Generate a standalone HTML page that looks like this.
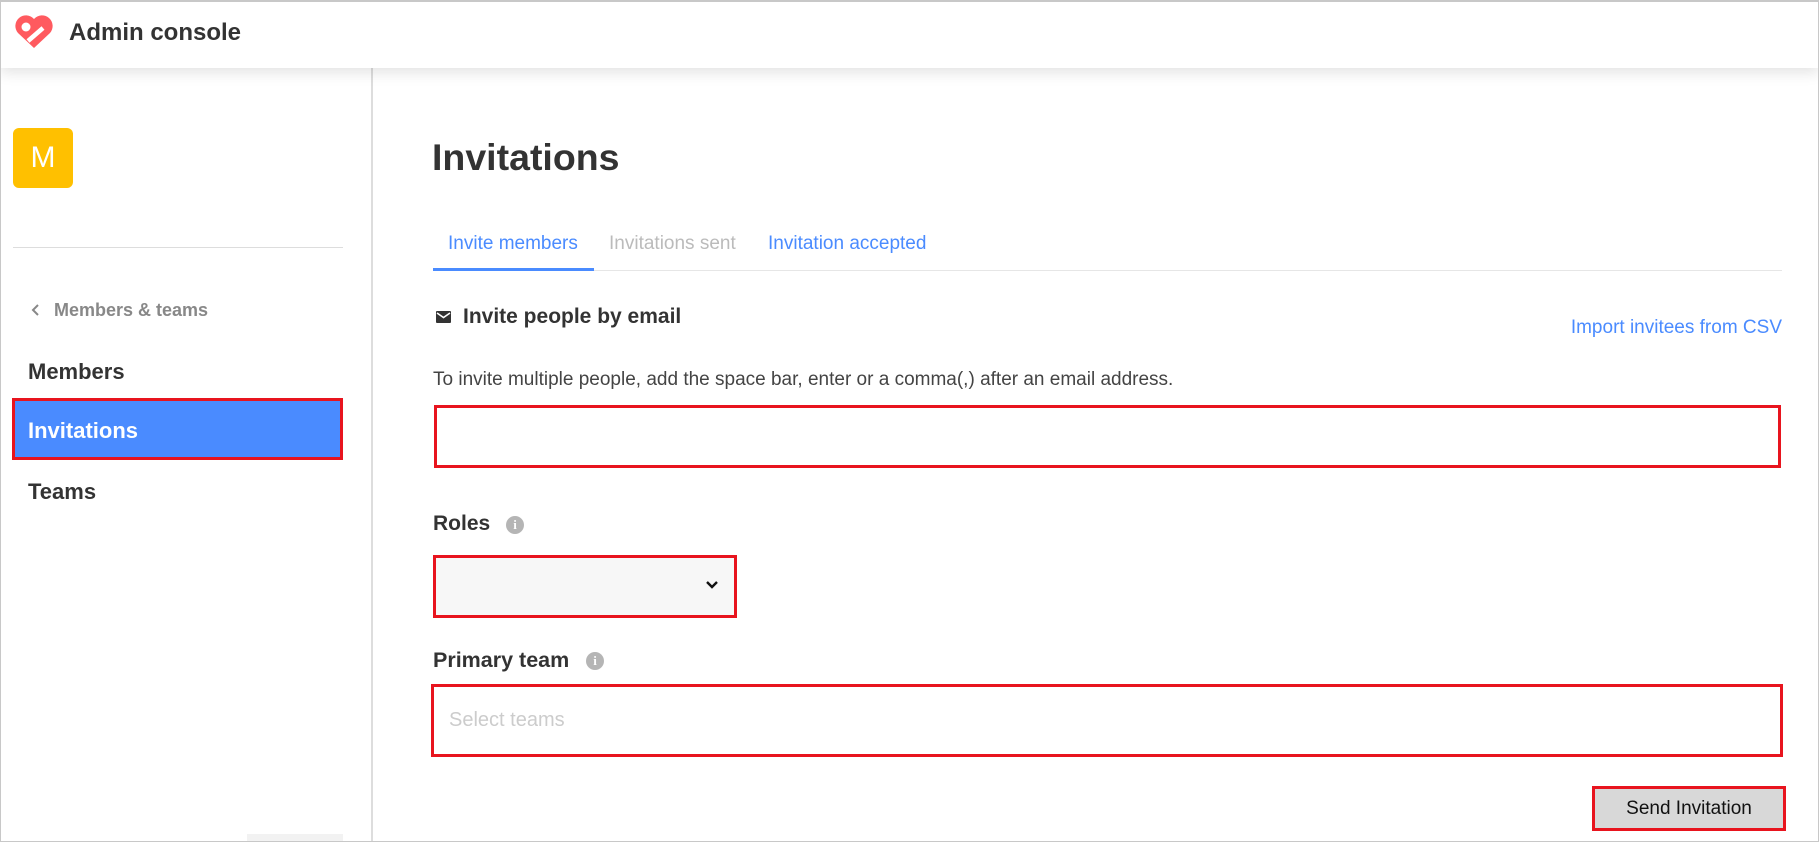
<!DOCTYPE html>
<html><head><meta charset="utf-8"><style>
*{box-sizing:border-box;margin:0;padding:0}
body{width:1819px;height:842px;overflow:hidden;background:#fff;font-family:"Liberation Sans",sans-serif;color:#333;position:relative}
.abs{position:absolute}
.frame{left:0;top:0;width:1819px;height:842px;border:1px solid #c8c8c8;border-top:2px solid #c8c8c8;z-index:10;pointer-events:none}
.hdr{left:0;top:0;width:1819px;height:68px;background:#fff;box-shadow:0 4px 14px rgba(0,0,0,.12);z-index:5}
.side{left:0;top:68px;width:373px;height:774px;border-right:2px solid #ddd}
.b{font-weight:bold}
.red{border:3px solid #e8141e}
</style></head><body>
<div class="abs hdr">
 <svg class="abs" style="left:13px;top:12px" width="42" height="38" viewBox="0 0 42 38">
  <path d="M21 36 L5 21 A9 9 0 0 1 21 7 A9 9 0 0 1 37 21 Z" fill="#ff5a5f"/>
  <circle cx="13" cy="15" r="4.5" fill="#fff"/>
  <path d="M15 29 L30 16" stroke="#fff" stroke-width="4.5"/>
 </svg>
 <div class="abs b" style="left:69px;top:19px;font-size:24px;color:#333">Admin console</div>
</div>
<div class="abs side">
 <div class="abs" style="left:13px;top:60px;width:60px;height:60px;background:#ffc000;border-radius:6px;color:#fff;font-size:30px;text-align:center;line-height:60px">M</div>
 <div class="abs" style="left:13px;top:179px;width:330px;height:1px;background:#ddd"></div>
 <svg class="abs" style="left:31px;top:235px" width="10" height="14" viewBox="0 0 10 14"><path d="M7 2 L2 7 L7 12" stroke="#888" stroke-width="2" fill="none"/></svg>
 <div class="abs b" style="left:54px;top:232px;font-size:18px;color:#888">Members &amp; teams</div>
 <div class="abs b" style="left:28px;top:291px;font-size:22px">Members</div>
 <div class="abs red" style="left:12px;top:330px;width:331px;height:62px;background:#4a8bff"></div>
 <div class="abs b" style="left:28px;top:350px;font-size:22px;color:#fff">Invitations</div>
 <div class="abs b" style="left:28px;top:411px;font-size:22px">Teams</div>
 <div class="abs" style="left:247px;top:766px;width:96px;height:8px;background:#f2f2f2"></div>
</div>
<div class="abs b" style="left:432px;top:136px;font-size:37.5px">Invitations</div>
<div class="abs" style="left:448px;top:233px;font-size:19px;color:#4a8bff">Invite members</div>
<div class="abs" style="left:609px;top:233px;font-size:19px;color:#bbb">Invitations sent</div>
<div class="abs" style="left:768px;top:233px;font-size:19px;color:#4a8bff">Invitation accepted</div>
<div class="abs" style="left:433px;top:270px;width:1349px;height:1px;background:#e6e6e6"></div>
<div class="abs" style="left:433px;top:268px;width:161px;height:3px;background:#4a8bff"></div>
<svg class="abs" style="left:436px;top:311px" width="15" height="12" viewBox="0 0 15 12"><rect width="15" height="12" rx="1" fill="#333"/><path d="M1 2 L7.5 6.5 L14 2" stroke="#fff" stroke-width="1.6" fill="none"/></svg>
<div class="abs b" style="left:463px;top:305px;font-size:21px">Invite people by email</div>
<div class="abs" style="right:37px;top:317px;font-size:19px;color:#4a8bff">Import invitees from CSV</div>
<div class="abs" style="left:433px;top:369px;font-size:19px;color:#444">To invite multiple people, add the space bar, enter or a comma(,) after an email address.</div>
<div class="abs red" style="left:434px;top:405px;width:1347px;height:63px"></div>
<div class="abs b" style="left:433px;top:512px;font-size:21px">Roles</div>
<div class="abs" style="left:506px;top:516px;width:18px;height:18px;border-radius:50%;background:#b5b5b5;color:#fff;font-size:13px;font-weight:bold;text-align:center;line-height:18px;font-family:'Liberation Serif',serif">i</div>
<div class="abs red" style="left:433px;top:555px;width:304px;height:63px;background:#f7f7f7"></div>
<svg class="abs" style="left:705px;top:580px" width="14" height="10" viewBox="0 0 14 10"><path d="M2 2 L7 7 L12 2" stroke="#111" stroke-width="2.4" fill="none"/></svg>
<div class="abs b" style="left:433px;top:648px;font-size:21.5px">Primary team</div>
<div class="abs" style="left:586px;top:652px;width:18px;height:18px;border-radius:50%;background:#b5b5b5;color:#fff;font-size:13px;font-weight:bold;text-align:center;line-height:18px;font-family:'Liberation Serif',serif">i</div>
<div class="abs red" style="left:431px;top:684px;width:1352px;height:73px"></div>
<div class="abs" style="left:449px;top:709px;font-size:20px;color:#ccc">Select teams</div>
<div class="abs red" style="left:1592px;top:786px;width:194px;height:45px;background:#d8d8d8;font-size:19px;color:#111;text-align:center;line-height:39px">Send Invitation</div>
<div class="abs frame"></div>
</body></html>
